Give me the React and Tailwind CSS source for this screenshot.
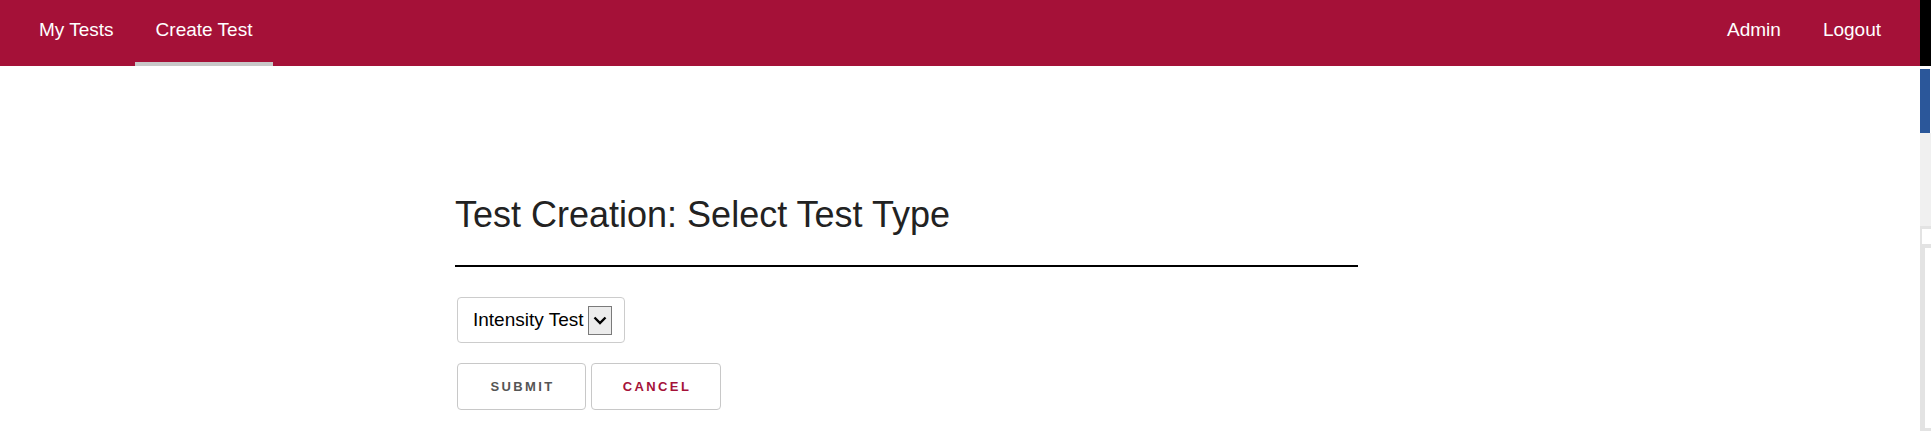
import React from 'react'

const NavItem = ({ label, active }) => (
    <a
        href="#"
        className={
            "h-full flex items-center px-[21px] text-white text-[19px] " +
            (active ? "border-b-4 border-[#c8c8c8] pb-[1px]" : "pb-[5px]")
        }
    >
        {label}
    </a>
)

const SideStrip = () => (
    <div className="w-[11px] h-[431px] flex flex-col">
        <div className="h-[66px] bg-black" />
        <div className="h-[3px] bg-white" />
        <div className="h-[64px] bg-[#2b579a] mr-[1px]" />
        <div className="h-[93px] bg-[#f0f0f0]" />
        <div className="h-[22px] bg-[#e3e3e3] pl-[2px] pt-[3px]">
            <div className="h-[15px] bg-white" />
        </div>
        <div className="flex-1 bg-[#e3e3e3] pl-[5px] pb-[3px]">
            <div className="h-full bg-white" />
        </div>
    </div>
)

const App = () => {
    return (
        <div className="flex w-full h-[431px] bg-white" style={{ fontFamily: '"Liberation Sans", Arial, sans-serif' }}>
            <div className="flex-1 flex flex-col">
                <nav className="h-[66px] bg-[#a51138] flex justify-between px-[18px]">
                    <div className="flex h-full">
                        <NavItem label="My Tests" />
                        <NavItem label="Create Test" active />
                    </div>
                    <div className="flex h-full">
                        <NavItem label="Admin" />
                        <NavItem label="Logout" />
                    </div>
                </nav>

                <div className="ml-[455px] w-[903px] mt-[131px]">
                    <h1 className="text-[36px] leading-[36px] text-[#222]">Test Creation: Select Test Type</h1>
                    <div className="h-[2px] bg-black mt-[32px]" />

                    <div className="ml-[2px] mt-[30px] flex flex-col gap-5">
                        <div className="w-[168px] h-[46px] border border-[#ccc] rounded-[4px] flex items-center pl-[15px] pr-[12px] justify-between">
                            <span className="text-[19px] text-black">Intensity Test</span>
                            <span className="w-[24px] h-[29px] border border-[#7a7a7a] bg-[#ececec] flex items-center justify-center">
                                <svg width="14" height="9" viewBox="0 0 14 9">
                                    <path d="M1.5 1.5 L7 7 L12.5 1.5" fill="none" stroke="#000" strokeWidth="2.4" />
                                </svg>
                            </span>
                        </div>

                        <div className="flex gap-[5px]">
                            <button className="w-[129px] h-[47px] border border-[#c8c8c8] rounded-[4px] bg-white text-[13px] font-bold tracking-[2.4px] text-[#555] pl-[2px]">
                                SUBMIT
                            </button>
                            <button className="w-[130px] h-[47px] border border-[#c8c8c8] rounded-[4px] bg-white text-[13px] font-bold tracking-[2.4px] text-[#a51138] pl-[2px]">
                                CANCEL
                            </button>
                        </div>
                    </div>
                </div>
            </div>
            <SideStrip />
        </div>
    )
}

export default App
